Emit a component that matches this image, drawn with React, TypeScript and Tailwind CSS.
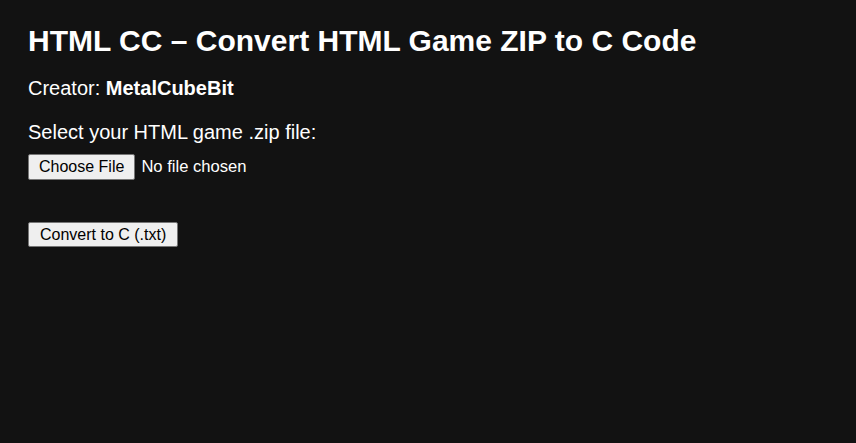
import React from "react";

export default function App() {
  return (
    <div className="min-h-[443px] w-full bg-[#121212] text-white px-[28px] pt-[24px] pb-[28px] font-['Liberation_Sans',Arial,sans-serif]">
      <h1 className="text-[30px] font-bold leading-[34px]">HTML CC – Convert HTML Game ZIP to C Code</h1>
      <p className="text-[20px] leading-[23px] mt-[19px]">
        Creator: <span className="font-bold">MetalCubeBit</span>
      </p>
      <p className="text-[20px] leading-[23px] mt-[21px]">Select your HTML game .zip file:</p>
      <div className="flex items-center mt-[10px] gap-[6px]">
        <button className="bg-[#efefef] text-black border border-[#767676] rounded-[2px] px-[10px] h-[26px] text-[16px] leading-[18px]">
          Choose File
        </button>
        <span className="text-[16.6px]">No file chosen</span>
      </div>
      <div className="mt-[42px]">
        <button className="bg-[#efefef] text-black border border-[#767676] rounded-[2px] px-[11px] h-[25px] text-[16px] leading-[18px]">
          Convert to C (.txt)
        </button>
      </div>
    </div>
  );
}
